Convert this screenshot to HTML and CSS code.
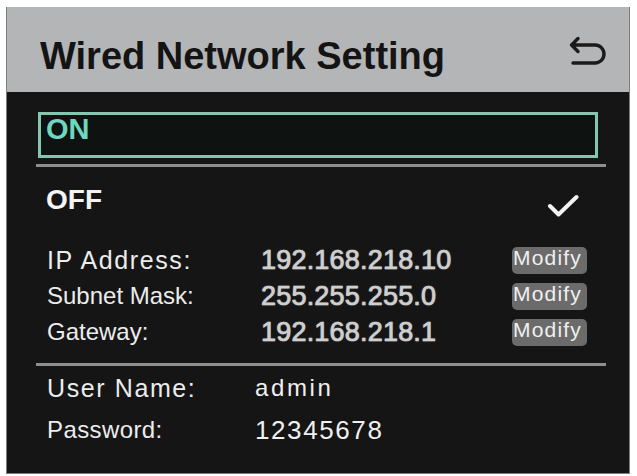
FILE: index.html
```html
<!DOCTYPE html>
<html lang="en">
<head>
<meta charset="utf-8">
<title>Wired Network Setting</title>
<link rel="stylesheet" href="styles.css">
</head>
<body>
<div class="screen">
  <header class="header">
    <h1 class="title">Wired Network Setting</h1>
    <svg class="back-icon" width="38" height="30" viewBox="0 0 38 30" aria-label="Back">
      <path d="M10 2.5 L3.5 9 L10 15.5 M3.5 9 H27 A9 9 0 0 1 27 27 H5" fill="none" stroke="#1a1a1a" stroke-width="3.4" stroke-linecap="round" stroke-linejoin="round"/>
    </svg>
  </header>
  <main class="content">
    <div class="option option-on">ON</div>
    <div class="divider divider-top"></div>
    <div class="option-off">
      <span class="off-label">OFF</span>
      <svg class="check" width="32" height="26" viewBox="0 0 32 26" aria-label="Selected">
        <path d="M3 14 L11.5 22.5 L29.5 5" fill="none" stroke="#f2f2f2" stroke-width="4" stroke-linecap="round" stroke-linejoin="round"/>
      </svg>
    </div>
    <div class="net-grid">
      <span class="label label-spaced">IP Address:</span>
      <span class="value">192.168.218.10</span>
      <span class="modify">Modify</span>
      <span class="label">Subnet Mask:</span>
      <span class="value">255.255.255.0</span>
      <span class="modify">Modify</span>
      <span class="label">Gateway:</span>
      <span class="value">192.168.218.1</span>
      <span class="modify">Modify</span>
    </div>
    <div class="divider divider-bottom"></div>
    <div class="account-grid">
      <span class="label label-spaced">User Name:</span>
      <span class="acc-value acc-user">admin</span>
      <span class="label label-pass">Password:</span>
      <span class="acc-value acc-pass">12345678</span>
    </div>
  </main>
</div>
</body>
</html>
```
FILE: styles.css
```css
* {
  box-sizing: border-box;
}

html, body {
  margin: 0;
  background: #ffffff;
}

body {
  padding: 7px 7px 0 6px;
  font-family: "Liberation Sans", Arial, sans-serif;
}

.screen {
  width: 624px;
  height: 467px;
  display: flex;
  flex-direction: column;
  border: 1px solid #7d7d7d;
  border-top: none;
  background: #151515;
}

.header {
  height: 85px;
  flex: none;
  display: flex;
  align-items: flex-start;
  justify-content: space-between;
  padding: 0 23px 0 33px;
  background: #b4b5b7;
}

.title {
  margin: 29px 0 0 0;
  font-size: 38px;
  line-height: 40px;
  font-weight: bold;
  color: #141414;
}

.back-icon {
  margin-top: 29px;
}

.content {
  flex: 1;
  display: flex;
  flex-direction: column;
  color: #eeeeee;
}

.option-on {
  margin: 20px 0 0 31px;
  width: 560px;
  height: 46px;
  border: 3px solid #85c6b1;
  background: #0e1311;
  padding: 0 0 0 5px;
  font-size: 29px;
  line-height: 28px;
  font-weight: bold;
  color: #6fd7bf;
}

.divider {
  margin-left: 29px;
  width: 570px;
  height: 3px;
  background: #8e8e8e;
}

.divider-top {
  margin-top: 6px;
}

.option-off {
  display: flex;
  align-items: center;
  margin-top: 16px;
  height: 34px;
  padding: 0 50px 0 39px;
}

.off-label {
  font-size: 28px;
  line-height: 34px;
  font-weight: bold;
  color: #f4f4f4;
}

.check {
  margin-left: auto;
  align-self: flex-end;
  margin-bottom: -1px;
}

.net-grid {
  margin-top: 25px;
  padding-left: 40px;
  display: grid;
  grid-template-columns: 214px 251px 75px;
  grid-auto-rows: 36px;
  align-items: center;
}

.label {
  font-size: 24px;
  line-height: 36px;
  color: #ececec;
}

.label-spaced {
  font-size: 25px;
  letter-spacing: 1.6px;
}

.value {
  font-size: 27px;
  line-height: 36px;
  letter-spacing: 0.2px;
  color: #cfcfcf;
  -webkit-text-stroke: 0.7px #cfcfcf;
  text-shadow: 0 0 1.5px rgba(200, 200, 200, 0.7);
}

.modify {
  align-self: start;
  margin-top: 5px;
  height: 27px;
  padding: 0 0 0 1px;
  border-radius: 5px;
  background: #6b6b6b;
  font-size: 21px;
  line-height: 21px;
  letter-spacing: 1.2px;
  color: #f0f0f0;
  white-space: nowrap;
}

.divider-bottom {
  margin-top: 13px;
}

.account-grid {
  margin-top: 1px;
  padding-left: 40px;
  display: grid;
  grid-template-columns: 208px auto;
  grid-auto-rows: 42px;
  align-items: center;
}

.account-grid .label {
  line-height: 42px;
}

.label-pass {
  letter-spacing: 0.4px;
}

.acc-value {
  line-height: 42px;
  color: #f0f0f0;
}

.acc-user {
  font-size: 24px;
  letter-spacing: 2.6px;
}

.acc-pass {
  font-size: 26px;
  letter-spacing: 1.6px;
}
```
